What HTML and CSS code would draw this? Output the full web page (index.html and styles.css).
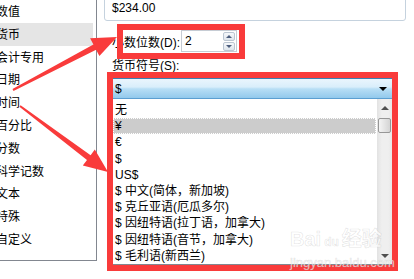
FILE: index.html
```html
<!DOCTYPE html>
<html lang="zh-CN">
<head>
  <meta charset="UTF-8">
  <title>设置单元格格式 - 货币</title>
  <link rel="stylesheet" href="styles.css">
</head>
<body>
  <div class="dialog">
    <!-- Category list (scrolled left, so text is cut at the edge) -->
    <ul class="category-list">
      <li>数值</li>
      <li class="selected">货币</li>
      <li>会计专用</li>
      <li>日期</li>
      <li>时间</li>
      <li>百分比</li>
      <li>分数</li>
      <li>科学记数</li>
      <li>文本</li>
      <li>特殊</li>
      <li>自定义</li>
    </ul>

    <div class="settings">
      <div class="sample">$234.00</div>

      <div class="decimal-row">
        <label>小数位数(D):</label>
        <div class="spin">
          <span>2</span>
          <div class="spin-buttons">
            <span class="spin-btn up"></span>
            <span class="spin-btn down"></span>
          </div>
        </div>
      </div>

      <div class="field-label">货币符号(S):</div>

      <div class="symbol-box">
        <div class="combo">
          <span>$</span>
          <span class="combo-arrow"></span>
        </div>
        <div class="symbol-list">
          <ul class="symbols">
            <li>无</li>
            <li class="selected">¥</li>
            <li>€</li>
            <li>$</li>
            <li>US$</li>
            <li>$ 中文(简体，新加坡)</li>
            <li>$ 克丘亚语(厄瓜多尔)</li>
            <li>$ 因纽特语(拉丁语，加拿大)</li>
            <li>$ 因纽特语(音节，加拿大)</li>
            <li>$ 毛利语(新西兰)</li>
          </ul>
          <div class="scrollbar">
            <div class="scroll-btn"><span class="tri-up"></span></div>
            <div class="scroll-thumb"></div>
            <div class="scroll-track"></div>
            <div class="scroll-btn"><span class="tri-down"></span></div>
          </div>
        </div>
      </div>
    </div>
  </div>

  <!-- Annotations drawn over the screenshot -->
  <div class="mark mark-decimal"></div>
  <div class="mark mark-symbol"></div>
  <svg class="arrows" width="414" height="279" viewBox="0 0 414 279">
    <polygon points="13.5,90.9 96.1,49.8 99.4,56.0 117,37 90.1,38.3 93.4,44.5 12.5,89.1" />
    <polygon points="19.4,106.8 87,160 82.8,165.6 108,172 94.8,149.6 90.6,155.2 20.6,105.2" />
  </svg>

  <div class="watermark">
    <div class="wm-logo">Bai<span class="wm-paw">du</span>经验</div>
    <div class="wm-url">jingyan.baidu.com</div>
  </div>
</body>
</html>
```

FILE: styles.css
```css
body {
  margin: 0;
  width: 414px;
  height: 279px;
  overflow: hidden;
  position: relative;
  background: #fff;
  color: #000;
  font-family: "Liberation Sans", "Noto Sans CJK SC", sans-serif;
  font-size: 12px;
}

.dialog {
  display: flex;
}

/* Left category list */
.category-list {
  list-style: none;
  margin: 0;
  padding: 0 3px 0 0;
  width: 93px;
  height: 260px;
  border-right: 1px solid #828790;
  border-bottom: 1px solid #828790;
  overflow: hidden;
  font-family: "Noto Sans CJK SC", sans-serif;
  font-size: 12px;
}

.category-list li {
  height: 22.8px;
  line-height: 22.8px;
  text-indent: -4px;
  white-space: nowrap;
}

.category-list .selected {
  background: #e5e5e5;
}

/* Right side */
.settings {
  flex: 1;
}

.sample {
  box-sizing: border-box;
  width: 302px;
  margin: -12px 0 0 7px;
  padding: 12px 7px 5px;
  border: 1px solid #c5d2de;
  border-radius: 3px;
  line-height: 14px;
}

.decimal-row {
  display: flex;
  align-items: center;
  height: 22px;
  margin: 9px 0 0 15px;
}

.decimal-row label {
  flex: 0 0 69px;
}

.spin {
  box-sizing: border-box;
  width: 56px;
  height: 22px;
  padding: 0 1px 0 3px;
  border: 1px solid #c6ccd4;
  display: flex;
  justify-content: space-between;
  line-height: 20px;
}

.spin-buttons {
  display: flex;
  flex-direction: column;
  gap: 1px;
  width: 12px;
  padding-top: 1px;
}

.spin-btn {
  box-sizing: border-box;
  height: 9px;
  border: 1px solid #bcc6d2;
  border-radius: 2px;
  background: linear-gradient(#f6f8fb, #dfe5ec);
  display: flex;
  align-items: center;
  justify-content: center;
}

.spin-btn::after {
  content: "";
  border-left: 3px solid transparent;
  border-right: 3px solid transparent;
}

.spin-btn.up::after {
  border-bottom: 3px solid #4b5c7c;
}

.spin-btn.down::after {
  border-top: 3px solid #4b5c7c;
}

.field-label {
  margin: 7px 0 0 15px;
  line-height: 14px;
}

/* Currency symbol combo + list */
.symbol-box {
  width: 284px;
  margin: 5px 0 0 13px;
}

.combo {
  box-sizing: border-box;
  height: 21px;
  padding: 0 6px 0 4px;
  border: 1px solid #3c7fb1;
  border-bottom-color: #5c9fd1;
  background: linear-gradient(#eaf5fd 0%, #d9eefb 42%, #b8def5 52%, #92c9ec 100%);
  display: flex;
  align-items: center;
  justify-content: space-between;
}

.combo-arrow {
  border-left: 4px solid transparent;
  border-right: 4px solid transparent;
  border-top: 4px solid #000;
}

.symbol-list {
  box-sizing: border-box;
  height: 166px;
  border: 1px solid #828790;
  border-top: none;
  display: flex;
}

.symbols {
  flex: 1;
  list-style: none;
  margin: 0;
  padding: 3px 0 0;
}

.symbols li {
  box-sizing: border-box;
  height: 16.2px;
  line-height: 14px;
  margin: 0 1px 0 2px;
  padding-left: 1px;
  border: 1px solid transparent;
  white-space: nowrap;
  overflow: hidden;
}

.symbols .selected {
  background: #cccccc;
  border: 1px dotted #fff;
}

.scrollbar {
  width: 16px;
  display: flex;
  flex-direction: column;
  background: linear-gradient(to right, #e2e2e2, #efefef 30%, #efefef 70%, #e6e6e6);
}

.scroll-btn {
  height: 17px;
  display: flex;
  align-items: center;
  justify-content: center;
}

.tri-up,
.tri-down {
  border-left: 4px solid transparent;
  border-right: 4px solid transparent;
}

.tri-up {
  border-bottom: 4px solid #505050;
}

.tri-down {
  border-top: 4px solid #505050;
}

.scroll-thumb {
  box-sizing: border-box;
  height: 15px;
  margin: 2px 2px 0 1px;
  border: 1px solid #979797;
  border-radius: 2px;
  background: linear-gradient(to right, #f4f4f4, #e4e4e4 50%, #d4d4d4);
}

.scroll-track {
  flex: 1;
}

/* Red annotations */
.mark {
  position: absolute;
  box-sizing: border-box;
  border: 6px solid #f93b3b;
}

.mark-decimal {
  left: 117px;
  top: 24px;
  width: 128px;
  height: 35px;
}

.mark-symbol {
  left: 107px;
  top: 72px;
  width: 291px;
  height: 199px;
}

.arrows {
  position: absolute;
  left: 0;
  top: 0;
  fill: #f93b3b;
}

/* Faint site watermark */
.watermark {
  position: absolute;
  left: 290px;
  top: 226px;
  color: rgba(255, 255, 255, 0.7);
  -webkit-text-stroke: 0.6px rgba(160, 160, 160, 0.3);
}

.wm-logo {
  font-size: 20px;
  font-weight: bold;
  line-height: 26px;
}

.wm-paw {
  font-size: 12px;
  margin: 0 3px;
}

.wm-url {
  font-size: 13px;
  line-height: 16px;
}
```
